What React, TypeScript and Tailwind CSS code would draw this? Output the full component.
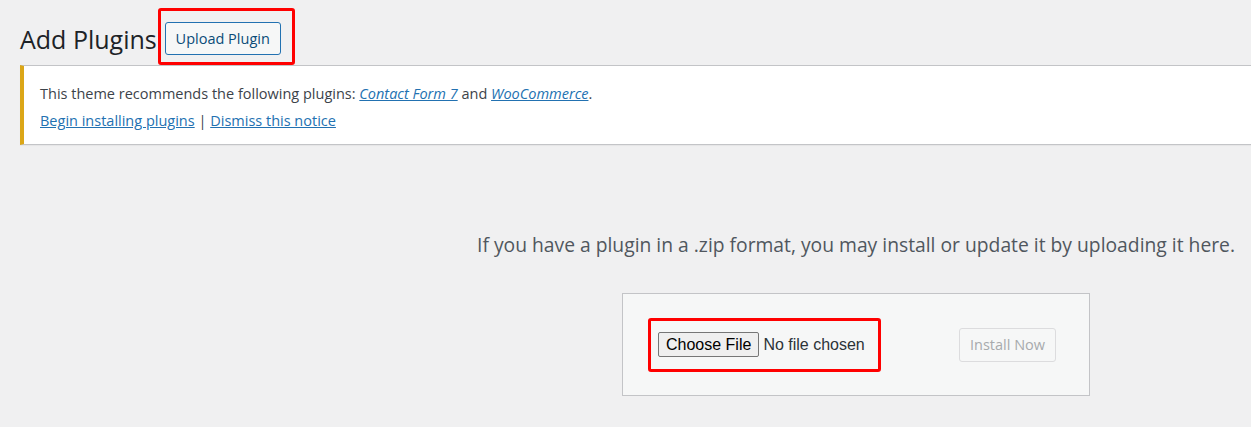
const font = { fontFamily: '"Open Sans", "Noto Sans", sans-serif' }

export default function App() {
  return (
    <div className="h-[427px] w-full overflow-hidden bg-[#f0f0f1] text-[#3c434a]" style={font}>
      <div className="ml-5 w-[1672px]">
        {/* heading row */}
        <div className="mt-2 flex h-[57px] items-start">
          <h1 className="mt-[18px] text-[25px] leading-[26px] font-normal text-[#1d2327]">Add Plugins</h1>
          <div className="ml-[1px] rounded-[3px] border-[3px] border-[#ff0000] pt-[11px] pr-[11px] pb-[7px] pl-[4px]">
            <button className="flex h-[33px] w-[116px] items-center justify-center rounded-[3px] border border-[#2271b1] bg-[#f6f7f7] text-[14.5px] font-medium text-[#0a4b78]">
              Upload Plugin
            </button>
          </div>
        </div>

        {/* admin notice */}
        <div className="h-[80px] border border-l-4 border-[#c3c4c7] border-l-[#dba617] bg-white pt-[18px] pl-4 text-[14.5px] leading-5 shadow-[0_1px_1px_rgba(0,0,0,0.04)]">
          <p>
            This theme recommends the following plugins:{" "}
            <a href="#" className="text-[#2271b1] italic underline">
              Contact Form 7
            </a>{" "}
            and{" "}
            <a href="#" className="text-[#2271b1] italic underline">
              WooCommerce
            </a>
            .
          </p>
          <p className="mt-[7px]">
            <a href="#" className="text-[#2271b1] underline">
              Begin installing plugins
            </a>{" "}
            |{" "}
            <a href="#" className="text-[#2271b1] underline">
              Dismiss this notice
            </a>
          </p>
        </div>

        {/* upload area */}
        <p className="mt-[88px] text-center text-[19.3px] leading-6 text-[#50575e]">
          If you have a plugin in a .zip format, you may install or update it by uploading it here.
        </p>
        <div className="mx-auto mt-[36px] flex h-[103px] w-[468px] items-center justify-between border border-[#c3c4c7] bg-[#f6f7f7] pr-[33px] pl-[25px]">
          <div className="flex h-[54px] items-center rounded-[3px] border-[3px] border-[#ff0000] pr-[13px] pl-[7px]">
            <span
              className="flex h-[25px] items-center rounded-[2px] border border-[#767676] bg-[#efefef] px-[7px] text-[16px] text-black"
              style={{ fontFamily: '"Liberation Sans", Arial, sans-serif' }}
            >
              Choose File
            </span>
            <span
              className="ml-[4px] text-[16px] text-[#2c3338]"
              style={{ fontFamily: '"Liberation Sans", Arial, sans-serif' }}
            >
              No file chosen
            </span>
          </div>
          <button className="flex h-[34px] w-[97px] items-center justify-center rounded-[3px] border border-[#dcdcde] bg-[#f6f7f7] text-[14.5px] text-[#a7aaad]">
            Install Now
          </button>
        </div>
      </div>
    </div>
  )
}
